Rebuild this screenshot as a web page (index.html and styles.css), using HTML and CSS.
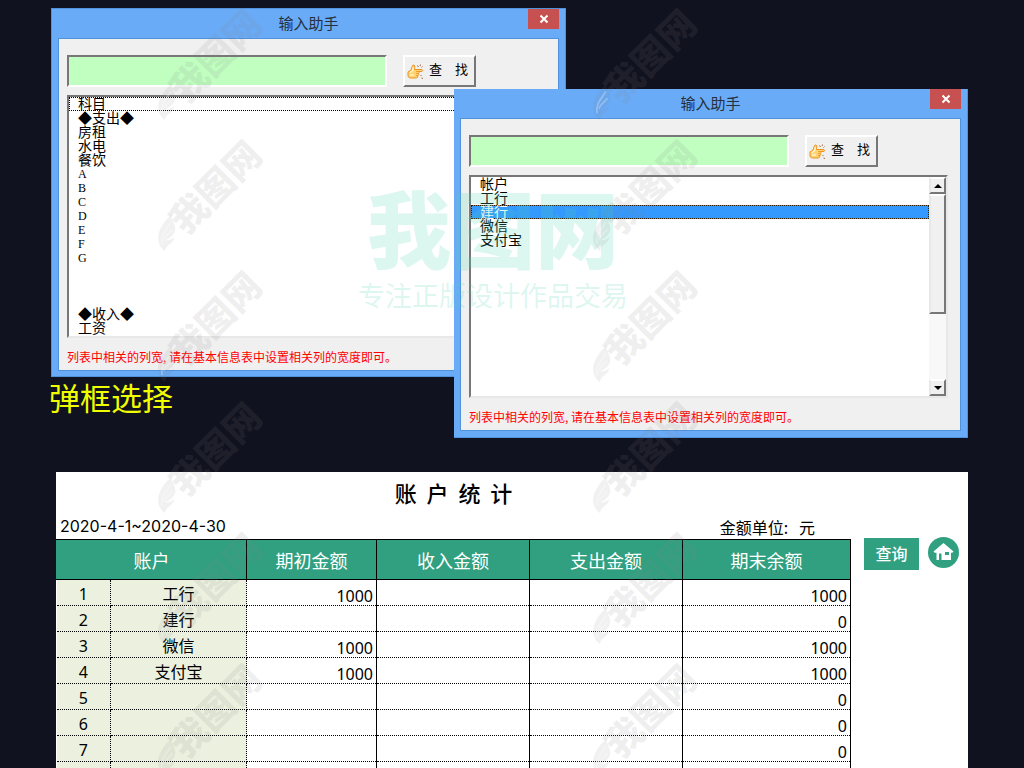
FILE: index.html
```html
<!DOCTYPE html>
<html lang="zh-CN">
<head>
<meta charset="utf-8">
<title>账户统计</title>
<link rel="stylesheet" href="styles.css">
</head>
<body>
<svg class="defs" aria-hidden="true">
  <symbol id="hand" viewBox="0 0 18 18">
    <path d="M1 10 L4 8 L5.500 3.500 Q7 2 7.800 4 L7.500 7.500 H15 Q16.500 8.500 15 9.500 H11.500 Q12.500 10.500 11.500 11.500 Q12.200 12.500 11 13.500 Q11 16 9 16 H3.500 Q1.500 15.800 1 14 Z" fill="#fdd272" stroke="#ee9420" stroke-width="1"/>
    <path d="M2.500 11 L5.500 8.800 L6.500 5 M3 13 H7" fill="none" stroke="#fff4c8" stroke-width="1.500"/>
    <path d="M9 9.500 H12 M9 11.500 H11.500 M9 13.500 H11" fill="none" stroke="#ee9420" stroke-width=".8"/>
    <path d="M10.500 3.500 L11.500 5 M13.500 2.500 L13 4 M15.500 4.500 L14.500 5.500 M13.500 13 L14.500 14 M14.500 16 L16 16.500" stroke="#a86a35" stroke-width="1"/>
  </symbol>
  <symbol id="flame" viewBox="0 0 24 46">
    <path d="M10 44 C-2 35 0 18 18 2 C17 9 21 10 22 17 C23 24 17 29 10 32 C14 32 18 31 21 28 C20 36 12 36 10 44 Z"/>
    <path d="M7 36 C5 25 12 20 17 11 M9 31 C11 25 16 23 19 19" fill="none" stroke="#fff" stroke-opacity=".3" stroke-width="2"/>
  </symbol>
</svg>

<div class="desktop">
  <div class="canvas">
    <section class="window window-subject" aria-label="输入助手">
      <header class="titlebar">
        <h2 class="window-title">输入助手</h2>
        <button class="close" type="button" aria-label="关闭"><svg viewBox="0 0 10 10"><path d="M1.500 1.500 L8.500 8.500 M8.500 1.500 L1.500 8.500"/></svg></button>
      </header>
      <div class="window-body">
        <div class="search">
          <input class="search-box" type="text" aria-label="查找内容">
          <button class="search-button" type="button"><svg class="hand"><use href="#hand"/></svg><span class="search-label">查　找</span></button>
        </div>
        <div class="listbox tall">
          <ul class="options" role="listbox" aria-label="科目">
            <li class="focused" role="option">科目</li>
            <li role="option">◆支出◆</li>
            <li role="option">房租</li>
            <li role="option">水电</li>
            <li role="option">餐饮</li>
            <li class="latin" role="option">A</li>
            <li class="latin" role="option">B</li>
            <li class="latin" role="option">C</li>
            <li class="latin" role="option">D</li>
            <li class="latin" role="option">E</li>
            <li class="latin" role="option">F</li>
            <li class="latin" role="option">G</li>
            <li></li>
            <li></li>
            <li></li>
            <li role="option">◆收入◆</li>
            <li role="option">工资</li>
          </ul>
        </div>
        <p class="note">列表中相关的列宽, 请在基本信息表中设置相关列的宽度即可。</p>
      </div>
    </section>

    <section class="window window-account" aria-label="输入助手">
      <header class="titlebar">
        <h2 class="window-title">输入助手</h2>
        <button class="close" type="button" aria-label="关闭"><svg viewBox="0 0 10 10"><path d="M1.500 1.500 L8.500 8.500 M8.500 1.500 L1.500 8.500"/></svg></button>
      </header>
      <div class="window-body">
        <div class="search">
          <input class="search-box" type="text" aria-label="查找内容">
          <button class="search-button" type="button"><svg class="hand"><use href="#hand"/></svg><span class="search-label">查　找</span></button>
        </div>
        <div class="listbox">
          <ul class="options" role="listbox" aria-label="帐户">
            <li role="option">帐户</li>
            <li role="option">工行</li>
            <li class="selected" role="option" aria-selected="true">建行</li>
            <li role="option">微信</li>
            <li role="option">支付宝</li>
          </ul>
          <div class="scrollbar">
            <button class="arrow" type="button" aria-label="向上"><svg viewBox="0 0 8 4"><path d="M0 4 L4 0 L8 4 Z"/></svg></button>
            <div class="thumb"></div>
            <div class="track"></div>
            <button class="arrow" type="button" aria-label="向下"><svg viewBox="0 0 8 4"><path d="M0 0 L4 4 L8 0 Z"/></svg></button>
          </div>
        </div>
        <p class="note">列表中相关的列宽, 请在基本信息表中设置相关列的宽度即可。</p>
      </div>
    </section>

    <p class="caption">弹框选择</p>
  </div>

  <main class="sheet">
    <div class="report">
      <h1 class="report-title">账  户  统  计</h1>
      <div class="meta"><span class="period">2020-4-1~2020-4-30</span><span class="unit">金额单位:   元</span></div>
      <table class="accounts">
        <colgroup><col class="c-index"><col class="c-name"><col class="c-open"><col class="c-flow"><col class="c-flow"><col class="c-close"></colgroup>
        <thead>
          <tr><th colspan="2">账户</th><th>期初金额</th><th>收入金额</th><th>支出金额</th><th>期末余额</th></tr>
        </thead>
        <tbody>
          <tr><td class="key">1</td><td class="key">工行</td><td>1000</td><td></td><td></td><td>1000</td></tr>
          <tr><td class="key">2</td><td class="key">建行</td><td></td><td></td><td></td><td>0</td></tr>
          <tr><td class="key">3</td><td class="key">微信</td><td>1000</td><td></td><td></td><td>1000</td></tr>
          <tr><td class="key">4</td><td class="key">支付宝</td><td>1000</td><td></td><td></td><td>1000</td></tr>
          <tr><td class="key">5</td><td class="key"></td><td></td><td></td><td></td><td>0</td></tr>
          <tr><td class="key">6</td><td class="key"></td><td></td><td></td><td></td><td>0</td></tr>
          <tr><td class="key">7</td><td class="key"></td><td></td><td></td><td></td><td>0</td></tr>
          <tr><td class="key"></td><td class="key"></td><td></td><td></td><td></td><td></td></tr>
        </tbody>
      </table>
    </div>
    <div class="actions">
      <button class="query" type="button">查询</button>
      <button class="home" type="button" aria-label="首页">
        <svg viewBox="0 0 31 31"><path d="M15.500 6 L25.500 14.500 L24.300 15.800 H23 V23 H13.500 V16.500 H11 V23 H8.500 V15.800 H6.700 L5.500 14.500 Z" fill="#fff"/><path d="M17 15 H21 V18 H17 Z" fill="#30a080"/></svg>
      </button>
    </div>
  </main>

  <div class="brand" aria-hidden="true">
    <div class="brand-name">我图网</div>
    <div class="brand-line">专注正版设计作品交易</div>
  </div>
  <div class="marks" aria-hidden="true">
    <div class="mark"><svg><use href="#flame"/></svg><span>我图网</span></div>
    <div class="mark"><svg><use href="#flame"/></svg><span>我图网</span></div>
    <div class="mark"><svg><use href="#flame"/></svg><span>我图网</span></div>
    <div class="mark"><svg><use href="#flame"/></svg><span>我图网</span></div>
    <div class="mark"><svg><use href="#flame"/></svg><span>我图网</span></div>
    <div class="mark"><svg><use href="#flame"/></svg><span>我图网</span></div>
    <div class="mark"><svg><use href="#flame"/></svg><span>我图网</span></div>
    <div class="mark"><svg><use href="#flame"/></svg><span>我图网</span></div>
    <div class="mark"><svg><use href="#flame"/></svg><span>我图网</span></div>
    <div class="mark"><svg><use href="#flame"/></svg><span>我图网</span></div>
    <div class="mark"><svg><use href="#flame"/></svg><span>我图网</span></div>
    <div class="mark"><svg><use href="#flame"/></svg><span>我图网</span></div>
  </div>
</div>
</body>
</html>
```

FILE: styles.css
```css
* { box-sizing: border-box; }

body {
  margin: 0;
  background: #10121f;
  color: #000;
  font-family: "Noto Sans CJK SC", sans-serif;
}

h1, h2, p, ul { margin: 0; padding: 0; font-weight: 400; }

button, input { font: inherit; padding: 0; border-radius: 0; }

.defs { position: absolute; width: 0; height: 0; }

.desktop {
  position: relative;
  height: 100vh;
  overflow: hidden;
}

.canvas { position: relative; height: 472px; }

/* Dialog windows */
.window {
  position: absolute;
  width: 515px;
  padding: 0 6px 5px;
  background: #6aabf7;
  border: 1px solid #5192dc;
}

.window-subject { left: 51px; top: 8px; }

.window-account {
  left: 454px;
  top: 89px;
  width: 514px;
  padding: 0 6px 6px;
  border-width: 0 1px 1px 0;
}

.titlebar {
  position: relative;
  height: 29px;
  text-align: center;
}

.window-title { font-size: 15px; line-height: 28px; color: #25303c; }

.close {
  position: absolute;
  top: 0;
  right: 0;
  width: 31px;
  height: 20px;
  border: 0;
  background: #c75050;
  display: grid;
  place-items: center;
}

.close svg { width: 10px; height: 10px; stroke: #fff; stroke-width: 2; }

.window-body {
  padding: 16px 12px 0 8px;
  background: #f0f0f0;
  border: 1px solid #5192dc;
}

.search { display: flex; gap: 16px; margin-bottom: 8px; }

.search-box {
  width: 320px;
  height: 32px;
  background: #c0ffc0;
  border: 2px solid;
  border-color: #777 #fff #fff #777;
}

.search-button {
  display: flex;
  align-items: center;
  gap: 4px;
  width: 73px;
  height: 32px;
  padding-left: 2px;
  font-size: 13px;
  line-height: 24px;
  color: #000;
  background: #f0f0f0;
  border: 2px solid;
  border-color: #fff #777 #777 #fff;
  white-space: nowrap;
}

.search-label { padding-bottom: 4px; }

.hand { width: 18px; height: 18px; flex: none; }

.listbox {
  display: flex;
  height: 223px;
  background: #fff;
  border: 2px solid;
  border-color: #777 #e8e8e8 #e8e8e8 #777;
  overflow: hidden;
}

.listbox.tall { height: 243px; }

.options {
  flex: 1;
  list-style: none;
  font-size: 14px;
  line-height: 14px;
}

.options li { height: 14px; padding-left: 8px; border: 1px solid transparent; line-height: 11px; }
.options .focused { border: 1px dotted #000; }
.options .selected { background: #3399ff; color: #fff; border: 1px dotted #301800; }
.options .latin { font-family: "Liberation Serif", serif; font-size: 12px; line-height: 13px; }

.scrollbar {
  display: flex;
  flex-direction: column;
  width: 17px;
  background: #f8f8f8;
}

.arrow, .thumb {
  background: #f0f0f0;
  border: 2px solid;
  border-color: #fff #777 #777 #e8e8e8;
}

.arrow { display: grid; place-items: center; width: 17px; height: 17px; }
.arrow svg { width: 8px; height: 4px; }
.thumb { height: 120px; }
.track { flex: 1; }

.note {
  padding-top: 6px;
  font-size: 12px;
  line-height: 26px;
  color: #f00;
  white-space: nowrap;
}

.caption {
  position: absolute;
  left: 49px;
  top: 377px;
  font-size: 31px;
  line-height: 40px;
  color: #f0ff00;
}

/* Account report */
.sheet {
  display: flex;
  gap: 13px;
  min-height: 300px;
  margin: 0 56px;
  padding: 0 10px 0 0;
  background: #fff;
}

.report { flex: 1; }

.report-title {
  height: 44px;
  font-size: 22px;
  line-height: 40px;
  font-weight: 500;
  text-align: center;
  white-space: pre;
}

.meta {
  display: flex;
  justify-content: space-between;
  height: 23px;
  padding: 0 36px 0 4px;
  font-size: 16px;
  line-height: 20px;
}

.period { font-family: Inter, sans-serif; }
.unit { font-size: 16px; line-height: 22px; white-space: pre; }

.accounts {
  width: 100%;
  table-layout: fixed;
  border-collapse: collapse;
  font-size: 16px;
  line-height: 20px;
}

.c-index { width: 54px; }
.c-name { width: 136px; }
.c-open { width: 130px; }
.c-flow { width: 153px; }
.c-close { width: 168px; }

.accounts th {
  height: 40px;
  padding: 0;
  font-size: 18px;
  font-weight: 400;
  color: #fff;
  background: #30a080;
  border: 1px solid #000;
  border-left-color: #30a080;
}

.accounts th + th { border-left-color: #000; }

.accounts td {
  height: 26px;
  padding: 7px 3px 0;
  line-height: 18px;
  text-align: right;
  font-family: "Noto Sans", "Noto Sans CJK SC", sans-serif;
  border-right: 1px solid #000;
  border-bottom: 1px dotted #000;
}

.accounts .key {
  padding: 3px 0 0;
  text-align: center;
  background: #ebf1de;
  border-right: 1px dotted #000;
}

.actions { display: flex; align-items: flex-start; gap: 9px; padding-top: 66px; }

.query {
  width: 55px;
  height: 32px;
  padding-bottom: 2px;
  border: 0;
  background: #30a080;
  color: #fff;
  font-size: 16px;
  font-weight: 500;
  line-height: 28px;
}

.home {
  width: 31px;
  height: 31px;
  margin-top: -1px;
  border: 0;
  border-radius: 50%;
  background: #30a080;
}

.home svg { display: block; width: 31px; height: 31px; }

/* Watermark layer */
.brand {
  position: absolute;
  left: 358px;
  top: 184px;
  color: rgba(80, 210, 180, .2);
  text-align: center;
  white-space: nowrap;
  pointer-events: none;
}

.brand-name { font-size: 84px; line-height: 84px; font-weight: 900; }
.brand-line { font-size: 27px; line-height: 54px; }

.marks {
  position: absolute;
  left: 130px;
  top: -3px;
  display: grid;
  grid-template-columns: 150px 150px;
  grid-auto-rows: 131px;
  column-gap: 285px;
  pointer-events: none;
}

.mark {
  display: flex;
  align-items: center;
  justify-content: center;
  color: rgba(128, 128, 128, .12);
  font-size: 37px;
  line-height: 40px;
  font-weight: 900;
  white-space: nowrap;
  transform: rotate(-45deg);
}

.mark svg { flex: none; width: 24px; height: 40px; fill: currentColor; opacity: .9; transform: rotate(45deg); }
```
